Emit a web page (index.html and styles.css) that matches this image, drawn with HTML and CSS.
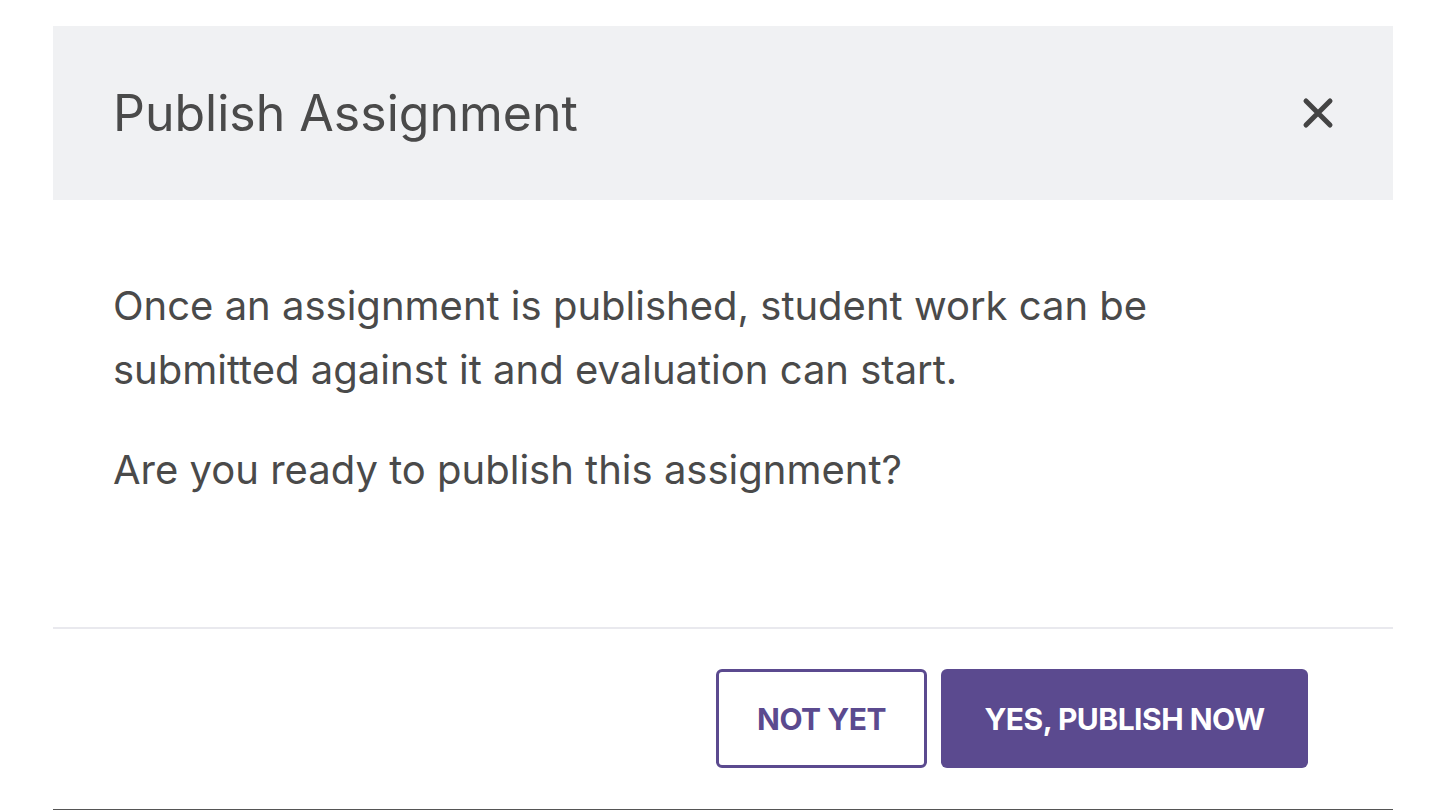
FILE: index.html
```html
<!DOCTYPE html>
<html>
<head>
<meta charset="utf-8">
<link rel="stylesheet" href="styles.css">
</head>
<body>
<div class="dialog">
  <div class="header">
    <h1 class="title">Publish Assignment</h1>
    <button class="close" aria-label="Close">
      <svg width="32" height="32" viewBox="0 0 32 32"><path d="M4 4 L28 28 M28 4 L4 28" stroke="#444" stroke-width="5" stroke-linecap="round"/></svg>
    </button>
  </div>
  <div class="body">
    <p class="para">Once an assignment is published, student work can be<br>submitted against it and evaluation can start.</p>
    <p class="para second">Are you ready to publish this assignment?</p>
  </div>
  <div class="footer">
    <button class="btn btn-outline">NOT YET</button>
    <button class="btn btn-primary">YES, PUBLISH NOW</button>
  </div>
</div>
</body>
</html>
```
FILE: styles.css
```css
html, body {
  margin: 0;
  padding: 0;
  background: #ffffff;
}
body {
  font-family: Inter, "Noto Sans", sans-serif;
  color: #4a4a4a;
  overflow: hidden;
}
.dialog {
  margin: 26px 0 0 53px;
  width: 1340px;
}
.header {
  height: 174px;
  background: #f0f1f3;
  display: flex;
  align-items: center;
  justify-content: space-between;
  padding: 0 59px 0 60px;
  box-sizing: border-box;
}
.title {
  margin: 0;
  font-size: 50px;
  font-weight: 400;
  color: #4a4a4a;
}
.close {
  border: none;
  background: none;
  padding: 0;
  width: 32px;
  height: 32px;
  display: flex;
}
.body {
  padding: 74px 60px 125px;
}
.para {
  margin: 0;
  font-size: 40px;
  line-height: 64px;
}
.second {
  margin-top: 36px;
}
.footer {
  border-top: 2px solid #e9e9ee;
  border-bottom: 2px solid #555;
  height: 184px;
  box-sizing: border-box;
  display: flex;
  justify-content: flex-end;
  align-items: flex-start;
  gap: 14px;
  padding: 40px 85px 0 0;
}
.btn {
  height: 99px;
  font-family: Inter, sans-serif;
  font-size: 30px;
  font-weight: 700;
  border-radius: 6px;
  box-sizing: border-box;
  letter-spacing: -0.5px;
}
.btn-outline {
  width: 211px;
  background: #fff;
  color: #5b4a8f;
  border: 3px solid #5b4a8f;
}
.btn-primary {
  width: 367px;
  background: #5b4a8f;
  color: #fff;
  border: none;
}
```
